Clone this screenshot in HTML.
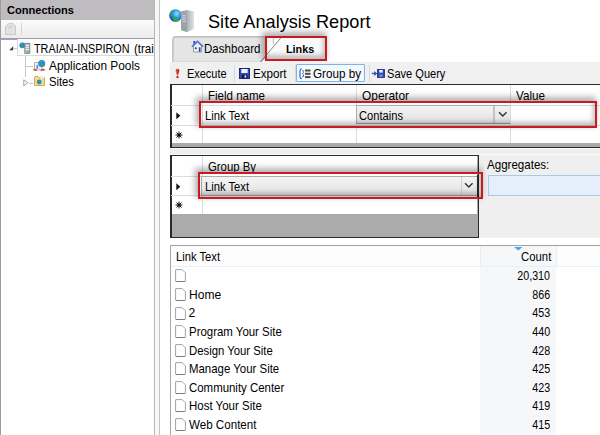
<!DOCTYPE html>
<html><head><meta charset="utf-8">
<style>
*{margin:0;padding:0;box-sizing:border-box}
html,body{width:600px;height:435px;overflow:hidden;background:#fff;font-family:"Liberation Sans",sans-serif;color:#000}
.a{position:absolute}
.t{position:absolute;white-space:nowrap;line-height:1}
svg{position:absolute;overflow:visible}
</style></head><body>
<div class="a" style="left:0px;top:0px;width:1px;height:435px;background:#9c9c9c"></div>
<div class="a" style="left:1px;top:0px;width:154px;height:19.5px;background:#bebcbf"></div>
<div class="t" style="left:7.30px;top:3.98px;font-size:11.6px;font-weight:bold;color:#000;transform:scaleX(0.9542);transform-origin:0 0;">Connections</div>
<div class="a" style="left:1px;top:19.5px;width:154px;height:19px;background:linear-gradient(#fbfbfb,#ebebeb)"></div>
<div class="a" style="left:1px;top:38.5px;width:154px;height:1px;background:#a3a3b6"></div>
<svg style="left:3px;top:22px" width="14" height="14"><path d="M2.5 4.5 L6 1.5 L10 1.5 L12.5 4 L12.5 12.5 L2.5 12.5 Z" fill="#e2e2e2" stroke="#c8c8c8"/><path d="M5 6 L9 4" stroke="#cfcfcf" stroke-width="1.5"/></svg>
<div class="a" style="left:21px;top:23px;width:1px;height:12px;background:#d8d4c0"></div>
<div class="a" style="left:17px;top:38.5px;width:138px;height:17px;border:1px solid #dadada;border-right:none;border-top:none;background:#fcfcfc"></div>
<div class="a" style="left:1px;top:38.3px;width:154px;height:1.2px;background:#9c9db4"></div>
<svg style="left:8px;top:45.5px" width="6" height="5"><path d="M5.2 0.3 L5.2 4.2 L1.2 4.2 Z" fill="#3a3a3a"/></svg>
<div class="a" style="left:14px;top:48px;width:3px;height:1px;background:#c8c8c8"></div>
<svg style="left:19px;top:42px" width="12" height="12"><circle cx="3.3" cy="3.3" r="2.9" fill="#2e86e0"/><path d="M0.8 2.5 Q2 0.8 3.5 1.5 Q3 3 2 3.5 Z M2.8 4.5 Q4.5 4 5.5 5.5 Q4.5 6.3 3.5 6 Z" fill="#34b23a"/><rect x="5.8" y="1.3" width="5" height="10" fill="#b5bcc4" stroke="#6f7880" stroke-width="0.8"/><rect x="6.7" y="3" width="3.2" height="0.9" fill="#f0f2f5"/><rect x="6.7" y="5" width="3.2" height="0.9" fill="#f0f2f5"/><rect x="6.7" y="7" width="3.2" height="0.9" fill="#f0f2f5"/><rect x="8" y="9.2" width="1.6" height="1.4" fill="#3c3"/></svg>
<div class="a" style="left:0;top:0;width:154.3px;height:100px;overflow:hidden"><div class="t" style="left:34.00px;top:41.60px;font-size:13px;font-weight:normal;color:#000;transform:scaleX(0.8324);transform-origin:0 0;">TRAIAN-INSPIRON</div>
<div class="t" style="left:134.30px;top:41.60px;font-size:13px;font-weight:normal;color:#000;transform:scaleX(0.8843);transform-origin:0 0;">(trai</div>
</div><div class="a" style="left:25px;top:56px;width:1px;height:21px;background:#c8c8c8"></div>
<div class="a" style="left:26px;top:65.5px;width:7px;height:1px;background:#c8c8c8"></div>
<svg style="left:33px;top:58.5px" width="13" height="13"><path d="M1.5 3.5 L7 3.5 L9 5.5 L9 11 L1.5 11 Z" fill="#eceff3" stroke="#98a0aa" stroke-width="0.8"/><rect x="3.5" y="6" width="1.5" height="4" fill="#6a8ac8"/><circle cx="8.7" cy="4.5" r="3.6" fill="#2f8be0"/><path d="M6 3 Q7.5 1.2 9.5 1.5 Q8.5 3 7.5 4 Z M8.5 5.5 Q10.5 5 12 6.5 Q10.5 7.8 9 7.5 Z" fill="#36b23c"/><path d="M0.8 11.5 Q1.5 9.5 3.5 11.8 M8 11.8 Q10 9.5 11.5 11.5" fill="none" stroke="#d23e2a" stroke-width="1.5"/></svg>
<div class="t" style="left:48.60px;top:58.80px;font-size:13px;font-weight:normal;color:#000;transform:scaleX(0.9124);transform-origin:0 0;">Application Pools</div>
<svg style="left:23px;top:79px" width="6" height="8"><path d="M0.8 0.8 L4.8 3.8 L0.8 6.8 Z" fill="none" stroke="#a0a0a0"/></svg>
<div class="a" style="left:29px;top:82.5px;width:4px;height:1px;background:#c8c8c8"></div>
<svg style="left:34px;top:76px" width="11" height="10"><path d="M0.5 2 L0.5 9.5 L10.5 9.5 L10.5 1.5 L5 1.5 L4.2 0.5 L1.2 0.5 Z" fill="#f3dc8c" stroke="#c8a546" stroke-width="0.9"/><rect x="6.5" y="0.8" width="3.2" height="2" fill="#fff" stroke="#d8d8d8" stroke-width="0.5"/><circle cx="5.2" cy="6" r="2.4" fill="#2f86d6"/><path d="M3.2 5.2 Q4.8 4 6 5 Q5 6 4 6 Z M5 6.8 Q6.5 6.3 7.3 7.2 Q6.5 8 5.5 7.8 Z" fill="#40b046"/></svg>
<div class="t" style="left:48.60px;top:75.40px;font-size:13px;font-weight:normal;color:#000;transform:scaleX(0.8649);transform-origin:0 0;">Sites</div>
<div class="a" style="left:154.3px;top:0px;width:1px;height:435px;background:#b9b9b9"></div>
<div class="a" style="left:155.3px;top:0px;width:3.5px;height:435px;background:#f7f7f7"></div>
<div class="a" style="left:158.8px;top:0px;width:1px;height:435px;background:#c4c4c4"></div>
<svg style="left:168px;top:8px" width="28" height="26"><defs><radialGradient id="gl" cx="0.6" cy="0.35" r="0.7"><stop offset="0" stop-color="#8fe0ff"/><stop offset="0.5" stop-color="#2a8ee0"/><stop offset="1" stop-color="#1b3fb0"/></radialGradient><linearGradient id="sv" x1="0" x2="1"><stop offset="0" stop-color="#8d959c"/><stop offset="0.45" stop-color="#aab1b8"/><stop offset="1" stop-color="#dfe3e6"/></linearGradient></defs><circle cx="7.5" cy="7.5" r="6.3" fill="url(#gl)"/><path d="M1.6 6.5 Q2.5 2.5 6 1.4 Q5 3 3.5 4.5 Q4.5 6.5 3 8 Z" fill="#2fae3a"/><path d="M4.5 9.5 Q7 8.5 9 10 Q11 11 11.5 12.5 Q9 14 6.5 13.5 Q5.5 11.5 4.5 9.5 Z" fill="#2fae3a"/><path d="M8 1.5 Q10 2 11 3 Q9.5 3.5 8 1.5Z" fill="#3cb843"/><path d="M13 3.5 L19 2 L26 3.5 L26 21 L19 24 L13 22 Z" fill="url(#sv)"/><path d="M13 3.5 L19 5 L19 24 L13 22 Z" fill="#9aa2aa"/><path d="M14 7 L18 8 M14 9 L18 10 M14 11 L18 12 M14 13 L18 14" stroke="#d8dde2" stroke-width="0.8"/><rect x="15" y="20" width="2" height="2" fill="#52d452"/></svg>
<div class="t" style="left:208.00px;top:12.99px;font-size:18.2px;font-weight:normal;color:#000;transform:scaleX(0.9984);transform-origin:0 0;">Site Analysis Report</div>
<svg style="left:172px;top:35.5px" width="110" height="27"><path d="M0.9 26.5 L0.9 3.9 Q0.9 0.9 3.9 0.9 L108 0.9 L108 5 L88 26.5 Z" fill="#e5e5e5" stroke="#c2c2c2" stroke-width="1.6"/></svg>
<svg style="left:190.5px;top:40px" width="14" height="13"><path d="M2.5 1 L4.2 1 L4.2 3.5 L2.5 5 Z" fill="#1f3fc0"/><path d="M2.5 6 L2.5 12 L10.5 12 L10.5 6 L6.5 2.3 Z" fill="#eef1f6" stroke="#8a95a5" stroke-width="0.9"/><path d="M0.8 6.8 L6.5 1.3 L12.2 6.8" stroke="#4f72e0" stroke-width="1.5" fill="none"/><circle cx="4.8" cy="8.3" r="1" fill="#334"/><rect x="7.8" y="7.3" width="1.7" height="4.5" fill="#1f48b8"/></svg>
<div class="t" style="left:203.60px;top:42.87px;font-size:12.2px;font-weight:normal;color:#000;transform:scaleX(0.9476);transform-origin:0 0;">Dashboard</div>
<div class="a" style="left:265px;top:36px;width:62.2px;height:25.2px;background:#fbfbfb"></div>
<svg style="left:258px;top:35.5px" width="30" height="27"><path d="M2 26.5 L24 0.5" stroke="#7a7a7a" stroke-width="0.9"/><path d="M15.3 1 L15.3 8" stroke="#b5b5b5" stroke-width="0.9"/></svg>
<div class="t" style="left:286.30px;top:43.28px;font-size:11.6px;font-weight:bold;color:#000;transform:scaleX(0.9313);transform-origin:0 0;">Links</div>
<div class="a" style="left:265px;top:36px;width:62.2px;height:25.2px;border:2.5px solid #ca1a21;box-shadow:-2px -3px 6px 1px rgba(0,0,0,0.3), inset -2px -4px 5px 0 rgba(0,0,0,0.25)"></div>
<div class="a" style="left:169.5px;top:62px;width:431px;height:176px;background:#efefef"></div>
<div class="a" style="left:169.5px;top:62px;width:431px;height:21.5px;background:#f0f0f0"></div>
<svg style="left:174px;top:67.5px" width="7" height="11"><defs><linearGradient id="ex" x1="0" x2="1"><stop offset="0" stop-color="#f0603a"/><stop offset="1" stop-color="#b8180e"/></linearGradient></defs><path d="M3.5 0.8 Q5.6 0.8 5.4 2.8 L4.1 7 L2.9 7 L1.6 2.8 Q1.4 0.8 3.5 0.8 Z" fill="url(#ex)"/><circle cx="3.5" cy="9" r="1.2" fill="#c0281a"/></svg>
<div class="t" style="left:187.00px;top:67.99px;font-size:12.3px;font-weight:normal;color:#000;transform:scaleX(0.8889);transform-origin:0 0;">Execute</div>
<div class="a" style="left:234px;top:65px;width:1px;height:17px;background:#d9d9d9"></div>
<svg style="left:238.5px;top:68px" width="12" height="11"><rect x="0.5" y="0.5" width="10" height="10" fill="#3448b4" stroke="#1a2580"/><rect x="2.3" y="1" width="6.4" height="4" fill="#f2f4fb"/><rect x="2.8" y="6.8" width="5.5" height="3.4" fill="#1a1a40"/><rect x="5.6" y="7.3" width="1.6" height="2.4" fill="#e0e4f0"/></svg>
<div class="t" style="left:252.80px;top:67.99px;font-size:12.3px;font-weight:normal;color:#000;transform:scaleX(0.9452);transform-origin:0 0;">Export</div>
<div class="a" style="left:294.5px;top:65px;width:1px;height:17px;background:#d9d9d9"></div>
<div class="a" style="left:296.2px;top:64px;width:69.3px;height:18px;border:1px solid #7db5ea;background:#f4f9fe;border-radius:1px"></div>
<svg style="left:299px;top:67.5px" width="12" height="12"><path d="M2.8 0.8 Q1 0.8 1 2.5 L1 9 Q1 10.7 2.8 10.7" stroke="#2a5db8" stroke-width="1.1" fill="none"/><path d="M3.2 2.8 Q4.5 2 4.5 3.5 Q4.5 5 3.5 5.7 Q4.7 6.5 4.5 8 Q4.2 9.5 3.2 8.8" stroke="#2a5db8" stroke-width="0.9" fill="none"/><rect x="6" y="1.5" width="5.5" height="2" fill="#4a4a4a"/><rect x="6" y="4.8" width="5.5" height="2" fill="#4a4a4a"/><rect x="6" y="8.1" width="5.5" height="2" fill="#4a4a4a"/></svg>
<div class="t" style="left:312.80px;top:67.99px;font-size:12.3px;font-weight:normal;color:#000;transform:scaleX(0.9487);transform-origin:0 0;">Group by</div>
<div class="a" style="left:368.5px;top:65px;width:1px;height:17px;background:#d9d9d9"></div>
<svg style="left:371px;top:68px" width="14" height="11"><rect x="6.5" y="1.5" width="7" height="8" fill="#3346b0" stroke="#1c2888" stroke-width="0.8"/><rect x="8.3" y="2" width="3.4" height="2.6" fill="#eef1fa"/><rect x="8.5" y="6.5" width="3" height="2.5" fill="#7e8ed8"/><path d="M0.8 5.5 L5 5.5" stroke="#2a5db8" stroke-width="1.4"/><path d="M3.2 3 L6.3 5.5 L3.2 8 Z" fill="#2a5db8"/></svg>
<div class="t" style="left:386.60px;top:67.99px;font-size:12.3px;font-weight:normal;color:#000;transform:scaleX(0.8993);transform-origin:0 0;">Save Query</div>
<div class="a" style="left:170px;top:84px;width:430px;height:64px;background:#ababab;border-top:1px solid #2a2a2a;border-left:2px solid #2a2a2a;border-bottom:1.5px solid #2a2a2a"></div>
<div class="a" style="left:172px;top:85px;width:428px;height:58px;background:#fff"></div>
<div class="a" style="left:170px;top:148px;width:430px;height:1px;background:#fafafa"></div>
<div class="a" style="left:170px;top:153.5px;width:430px;height:1px;background:#fafafa"></div>
<div class="a" style="left:202px;top:84.5px;width:1px;height:58.5px;background:#d6dde5"></div>
<div class="a" style="left:356.3px;top:84.5px;width:1px;height:58.5px;background:#d6dde5"></div>
<div class="a" style="left:510.3px;top:84.5px;width:1px;height:58.5px;background:#d6dde5"></div>
<div class="a" style="left:170.5px;top:104.5px;width:430px;height:1px;background:#d6dde5"></div>
<div class="a" style="left:170.5px;top:124.5px;width:430px;height:1px;background:#d6dde5"></div>
<div class="t" style="left:208.30px;top:89.87px;font-size:12.2px;font-weight:normal;color:#000;transform:scaleX(0.9453);transform-origin:0 0;">Field name</div>
<div class="t" style="left:362.30px;top:89.87px;font-size:12.2px;font-weight:normal;color:#000;transform:scaleX(0.9769);transform-origin:0 0;">Operator</div>
<div class="t" style="left:516.30px;top:89.87px;font-size:12.2px;font-weight:normal;color:#000;transform:scaleX(0.9582);transform-origin:0 0;">Value</div>
<svg style="left:176px;top:112px" width="6" height="8"><path d="M0.3 0.3 L4.3 3.8 L0.3 7.3 Z" fill="#111"/></svg>
<svg style="left:173.5px;top:129.5px" width="10" height="10"><path d="M5 1.5 L5 8.5 M1.5 5 L8.5 5 M2.5 2.5 L7.5 7.5 M7.5 2.5 L2.5 7.5" stroke="#111" stroke-width="1"/><circle cx="5" cy="5" r="1.6" fill="#111"/></svg>
<div class="a" style="left:356.3px;top:105.4px;width:154.5px;height:18.8px;background:linear-gradient(#f3f3f3,#e2e2e2);border:1px solid #acacac;border-bottom:1.5px solid #9c9c9c;border-right:1.5px solid #a8a8a8"></div>
<div class="a" style="left:493.3px;top:106.4px;width:1.4px;height:16.5px;background:#c4c4c4"></div>
<div class="a" style="left:510.3px;top:103.4px;width:1px;height:22.7px;background:#d6dde5"></div>
<div class="t" style="left:205.40px;top:110.14px;font-size:12.0px;font-weight:normal;color:#000;transform:scaleX(0.9355);transform-origin:0 0;">Link Text</div>
<div class="t" style="left:359.30px;top:110.14px;font-size:12.0px;font-weight:normal;color:#000;transform:scaleX(0.9288);transform-origin:0 0;">Contains</div>
<svg style="left:497.5px;top:111.3px" width="10" height="7"><path d="M1 1.2 L4.8 5 L8.6 1.2" stroke="#333" stroke-width="1.4" fill="none"/></svg>
<div class="a" style="left:198.7px;top:100.9px;width:398.3px;height:27.3px;border:2.5px solid #ca1a21;box-shadow:-2px -3px 6px 1px rgba(0,0,0,0.3), inset -2px -4px 5px 0 rgba(0,0,0,0.25)"></div>
<div class="a" style="left:170px;top:155px;width:308.5px;height:83px;background:#ababab;border-top:1px solid #2a2a2a;border-left:2px solid #2a2a2a;border-right:1.6px solid #2a2a2a;border-bottom:1.3px solid #2a2a2a"></div>
<div class="a" style="left:172px;top:156px;width:304.9px;height:57.5px;background:#fff"></div>
<div class="a" style="left:202px;top:155.5px;width:1px;height:58px;background:#d6dde5"></div>
<div class="a" style="left:170.5px;top:175.5px;width:306.5px;height:1px;background:#d6dde5"></div>
<div class="a" style="left:170.5px;top:194.5px;width:306.5px;height:1px;background:#d6dde5"></div>
<div class="t" style="left:208.30px;top:160.67px;font-size:12.2px;font-weight:normal;color:#000;transform:scaleX(0.9323);transform-origin:0 0;">Group By</div>
<svg style="left:176px;top:183px" width="6" height="8"><path d="M0.3 0.3 L4.3 3.8 L0.3 7.3 Z" fill="#111"/></svg>
<svg style="left:173.5px;top:200px" width="10" height="10"><path d="M5 1.5 L5 8.5 M1.5 5 L8.5 5 M2.5 2.5 L7.5 7.5 M7.5 2.5 L2.5 7.5" stroke="#111" stroke-width="1"/><circle cx="5" cy="5" r="1.6" fill="#111"/></svg>
<div class="a" style="left:201px;top:175.5px;width:276px;height:20px;background:linear-gradient(#f4f4f4,#e3e3e3);border:1px solid #acacac;border-right:none"></div>
<div class="a" style="left:460.8px;top:176.5px;width:1px;height:18px;background:#cfcfcf"></div>
<div class="a" style="left:477px;top:174.5px;width:1.3px;height:22px;background:#2a2a2a"></div>
<div class="t" style="left:205.40px;top:180.64px;font-size:12.0px;font-weight:normal;color:#000;transform:scaleX(0.9355);transform-origin:0 0;">Link Text</div>
<svg style="left:464px;top:182px" width="10" height="7"><path d="M1 1.2 L4.8 5 L8.6 1.2" stroke="#333" stroke-width="1.4" fill="none"/></svg>
<div class="a" style="left:198.3px;top:171.5px;width:284.5px;height:27.5px;border:2.5px solid #ca1a21;box-shadow:-2px -3px 6px 1px rgba(0,0,0,0.3), inset -2px -4px 5px 0 rgba(0,0,0,0.25)"></div>
<div class="t" style="left:487.30px;top:158.87px;font-size:12.2px;font-weight:normal;color:#000;transform:scaleX(0.9478);transform-origin:0 0;">Aggregates:</div>
<div class="a" style="left:487.5px;top:174.5px;width:113px;height:21.5px;background:#e4effb;border:1px solid #a8c9ec;border-right:none"></div>
<div class="a" style="left:169.5px;top:238px;width:431px;height:7px;background:#fff"></div>
<div class="a" style="left:170px;top:244.5px;width:430px;height:190.5px;background:#fff;border-left:1px solid #a6a6a6;border-top:1px solid #a0a0a0"></div>
<div class="a" style="left:171px;top:245.5px;width:429px;height:20px;background:#fcfcfc"></div>
<div class="a" style="left:479.5px;top:245.5px;width:76.5px;height:189.5px;background:#f6f7f8"></div>
<div class="a" style="left:479.5px;top:245.5px;width:1px;height:20px;background:#e7edf5"></div>
<div class="a" style="left:556px;top:245.5px;width:1px;height:20px;background:#e7edf5"></div>
<div class="a" style="left:171px;top:265.5px;width:429px;height:1px;background:#e8eff8"></div>
<svg style="left:514px;top:247px" width="9" height="4"><path d="M0 0 L8.5 0 L4.25 3.5 Z" fill="#569de5"/></svg>
<div class="t" style="left:176.30px;top:250.67px;font-size:12.2px;font-weight:normal;color:#000;transform:scaleX(0.9191);transform-origin:0 0;">Link Text</div>
<div class="t" style="right:48.70px;top:251.06px;font-size:12.1px;color:#000;text-align:right;transform:scaleX(0.9355);transform-origin:100% 0;">Count</div>
<svg style="left:175px;top:269.40px" width="11" height="13"><path d="M1 0.6 L7.2 0.6 L10.4 3.8 L10.4 12 Q10.4 12.5 9.9 12.5 L1 12.5 Q0.6 12.5 0.6 12 L0.6 1 Q0.6 0.6 1 0.6 Z" fill="#fff" stroke="#a2a2a2" stroke-width="1" stroke-linejoin="round"/><path d="M1 12.5 L9.9 12.5" stroke="#7d7d7d" stroke-width="1"/></svg>
<div class="t" style="right:49.60px;top:270.36px;font-size:12.1px;color:#000;text-align:right;transform:scaleX(0.8850);transform-origin:100% 0;">20,310</div>
<svg style="left:175px;top:287.95px" width="11" height="13"><path d="M1 0.6 L7.2 0.6 L10.4 3.8 L10.4 12 Q10.4 12.5 9.9 12.5 L1 12.5 Q0.6 12.5 0.6 12 L0.6 1 Q0.6 0.6 1 0.6 Z" fill="#fff" stroke="#a2a2a2" stroke-width="1" stroke-linejoin="round"/><path d="M1 12.5 L9.9 12.5" stroke="#7d7d7d" stroke-width="1"/></svg>
<div class="t" style="left:188.60px;top:288.91px;font-size:12.1px;font-weight:normal;color:#000;transform:scaleX(0.9949);transform-origin:0 0;">Home</div>
<div class="t" style="right:49.60px;top:288.91px;font-size:12.1px;color:#000;text-align:right;transform:scaleX(0.8850);transform-origin:100% 0;">866</div>
<svg style="left:175px;top:306.50px" width="11" height="13"><path d="M1 0.6 L7.2 0.6 L10.4 3.8 L10.4 12 Q10.4 12.5 9.9 12.5 L1 12.5 Q0.6 12.5 0.6 12 L0.6 1 Q0.6 0.6 1 0.6 Z" fill="#fff" stroke="#a2a2a2" stroke-width="1" stroke-linejoin="round"/><path d="M1 12.5 L9.9 12.5" stroke="#7d7d7d" stroke-width="1"/></svg>
<div class="t" style="left:188.60px;top:307.46px;font-size:12.1px;font-weight:normal;color:#000;">2</div>
<div class="t" style="right:49.60px;top:307.46px;font-size:12.1px;color:#000;text-align:right;transform:scaleX(0.8850);transform-origin:100% 0;">453</div>
<svg style="left:175px;top:325.05px" width="11" height="13"><path d="M1 0.6 L7.2 0.6 L10.4 3.8 L10.4 12 Q10.4 12.5 9.9 12.5 L1 12.5 Q0.6 12.5 0.6 12 L0.6 1 Q0.6 0.6 1 0.6 Z" fill="#fff" stroke="#a2a2a2" stroke-width="1" stroke-linejoin="round"/><path d="M1 12.5 L9.9 12.5" stroke="#7d7d7d" stroke-width="1"/></svg>
<div class="t" style="left:188.60px;top:326.01px;font-size:12.1px;font-weight:normal;color:#000;transform:scaleX(0.9454);transform-origin:0 0;">Program Your Site</div>
<div class="t" style="right:49.60px;top:326.01px;font-size:12.1px;color:#000;text-align:right;transform:scaleX(0.8850);transform-origin:100% 0;">440</div>
<svg style="left:175px;top:343.60px" width="11" height="13"><path d="M1 0.6 L7.2 0.6 L10.4 3.8 L10.4 12 Q10.4 12.5 9.9 12.5 L1 12.5 Q0.6 12.5 0.6 12 L0.6 1 Q0.6 0.6 1 0.6 Z" fill="#fff" stroke="#a2a2a2" stroke-width="1" stroke-linejoin="round"/><path d="M1 12.5 L9.9 12.5" stroke="#7d7d7d" stroke-width="1"/></svg>
<div class="t" style="left:188.60px;top:344.56px;font-size:12.1px;font-weight:normal;color:#000;transform:scaleX(0.9371);transform-origin:0 0;">Design Your Site</div>
<div class="t" style="right:49.60px;top:344.56px;font-size:12.1px;color:#000;text-align:right;transform:scaleX(0.8850);transform-origin:100% 0;">428</div>
<svg style="left:175px;top:362.15px" width="11" height="13"><path d="M1 0.6 L7.2 0.6 L10.4 3.8 L10.4 12 Q10.4 12.5 9.9 12.5 L1 12.5 Q0.6 12.5 0.6 12 L0.6 1 Q0.6 0.6 1 0.6 Z" fill="#fff" stroke="#a2a2a2" stroke-width="1" stroke-linejoin="round"/><path d="M1 12.5 L9.9 12.5" stroke="#7d7d7d" stroke-width="1"/></svg>
<div class="t" style="left:188.60px;top:363.11px;font-size:12.1px;font-weight:normal;color:#000;transform:scaleX(0.9447);transform-origin:0 0;">Manage Your Site</div>
<div class="t" style="right:49.60px;top:363.11px;font-size:12.1px;color:#000;text-align:right;transform:scaleX(0.8850);transform-origin:100% 0;">425</div>
<svg style="left:175px;top:380.70px" width="11" height="13"><path d="M1 0.6 L7.2 0.6 L10.4 3.8 L10.4 12 Q10.4 12.5 9.9 12.5 L1 12.5 Q0.6 12.5 0.6 12 L0.6 1 Q0.6 0.6 1 0.6 Z" fill="#fff" stroke="#a2a2a2" stroke-width="1" stroke-linejoin="round"/><path d="M1 12.5 L9.9 12.5" stroke="#7d7d7d" stroke-width="1"/></svg>
<div class="t" style="left:188.60px;top:381.66px;font-size:12.1px;font-weight:normal;color:#000;transform:scaleX(0.9452);transform-origin:0 0;">Community Center</div>
<div class="t" style="right:49.60px;top:381.66px;font-size:12.1px;color:#000;text-align:right;transform:scaleX(0.8850);transform-origin:100% 0;">423</div>
<svg style="left:175px;top:399.25px" width="11" height="13"><path d="M1 0.6 L7.2 0.6 L10.4 3.8 L10.4 12 Q10.4 12.5 9.9 12.5 L1 12.5 Q0.6 12.5 0.6 12 L0.6 1 Q0.6 0.6 1 0.6 Z" fill="#fff" stroke="#a2a2a2" stroke-width="1" stroke-linejoin="round"/><path d="M1 12.5 L9.9 12.5" stroke="#7d7d7d" stroke-width="1"/></svg>
<div class="t" style="left:188.60px;top:400.21px;font-size:12.1px;font-weight:normal;color:#000;transform:scaleX(0.9497);transform-origin:0 0;">Host Your Site</div>
<div class="t" style="right:49.60px;top:400.21px;font-size:12.1px;color:#000;text-align:right;transform:scaleX(0.8850);transform-origin:100% 0;">419</div>
<svg style="left:175px;top:417.80px" width="11" height="13"><path d="M1 0.6 L7.2 0.6 L10.4 3.8 L10.4 12 Q10.4 12.5 9.9 12.5 L1 12.5 Q0.6 12.5 0.6 12 L0.6 1 Q0.6 0.6 1 0.6 Z" fill="#fff" stroke="#a2a2a2" stroke-width="1" stroke-linejoin="round"/><path d="M1 12.5 L9.9 12.5" stroke="#7d7d7d" stroke-width="1"/></svg>
<div class="t" style="left:188.60px;top:418.76px;font-size:12.1px;font-weight:normal;color:#000;transform:scaleX(0.9591);transform-origin:0 0;">Web Content</div>
<div class="t" style="right:49.60px;top:418.76px;font-size:12.1px;color:#000;text-align:right;transform:scaleX(0.8850);transform-origin:100% 0;">415</div>
</body></html>
